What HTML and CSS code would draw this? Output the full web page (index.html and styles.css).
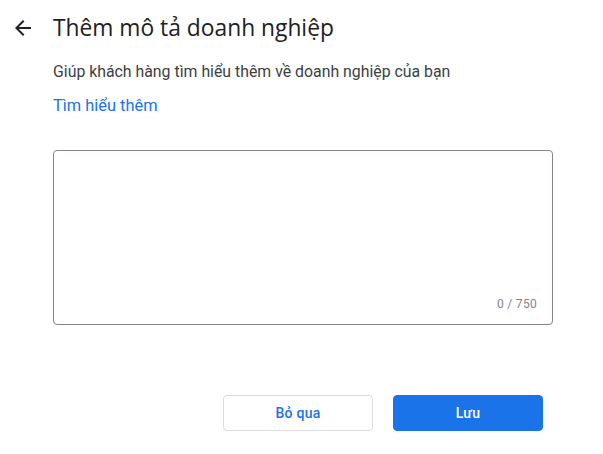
FILE: index.html
```html
<!DOCTYPE html>
<html lang="vi">
<head>
<meta charset="utf-8">
<link rel="stylesheet" href="styles.css">
</head>
<body>
<div class="page">
  <header class="header">
    <button class="back" aria-label="Quay lại">
      <svg width="24" height="24" viewBox="0 0 24 24"><path d="M20 11H7.83l5.59-5.59L12 4l-8 8 8 8 1.41-1.41L7.83 13H20v-2z" fill="#202124"/></svg>
    </button>
    <h1 class="title">Thêm mô tả doanh nghiệp</h1>
  </header>
  <main class="content">
    <p class="desc">Giúp khách hàng tìm hiểu thêm về doanh nghiệp của bạn</p>
    <a class="link" href="#">Tìm hiểu thêm</a>
    <div class="field">
      <textarea class="textarea"></textarea>
      <div class="counter">0 / 750</div>
    </div>
    <div class="actions">
      <button class="btn btn-outline">Bỏ qua</button>
      <button class="btn btn-primary">Lưu</button>
    </div>
  </main>
</div>
</body>
</html>
```

FILE: styles.css
```css
* { box-sizing: border-box; }
html, body { margin: 0; padding: 0; background: #fff; }
body { font-family: Roboto, "Noto Sans", Arial, sans-serif; color: #3c4043; }
.page { width: 603px; height: 454px; }
.header { display: flex; align-items: center; height: 54px; padding-left: 11px; }
.back { width: 24px; height: 24px; padding: 0; border: 0; background: none; display: flex; margin-right: 18px; margin-top: 1px; }
.title { margin: 0; font-family: "Open Sans", Roboto, sans-serif; font-weight: 400; font-size: 22.8px; color: #202124; letter-spacing: 0; }
.content { padding-left: 53px; padding-right: 50px; }
.desc { margin: 8px 0 0; font-size: 15.85px; line-height: 20px; color: #3c4043; }
.link { display: block; margin-top: 14px; font-size: 16.4px; line-height: 20px; color: #1a73e8; text-decoration: none; }
.field { position: relative; margin-top: 34px; width: 500px; height: 175px; }
.textarea { width: 100%; height: 100%; border: 1px solid #80868b; border-radius: 4px; resize: none; font-family: Roboto, sans-serif; font-size: 14px; padding: 12px 16px; outline: none; display: block; }
.counter { position: absolute; right: 16px; bottom: 14px; font-size: 12px; color: #80868b; letter-spacing: 0.3px; }
.actions { display: flex; justify-content: flex-end; gap: 20px; margin-top: 70px; width: 490px; }
.btn { width: 150px; height: 36px; border-radius: 4px; font-family: Roboto, sans-serif; font-size: 14px; font-weight: 500; letter-spacing: 0.25px; cursor: pointer; }
.btn-outline { background: #fff; border: 1px solid #dadce0; color: #1a73e8; }
.btn-primary { background: #1a73e8; border: 1px solid #1a73e8; color: #fff; }
```
